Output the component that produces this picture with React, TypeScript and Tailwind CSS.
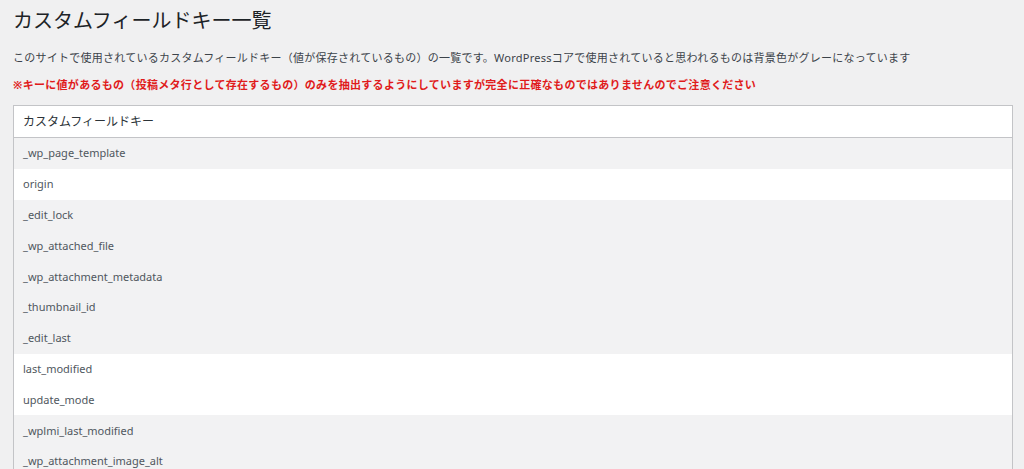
import React from "react";

const rows: { key: string; core: boolean }[] = [
  { key: "_wp_page_template", core: true },
  { key: "origin", core: false },
  { key: "_edit_lock", core: true },
  { key: "_wp_attached_file", core: true },
  { key: "_wp_attachment_metadata", core: true },
  { key: "_thumbnail_id", core: true },
  { key: "_edit_last", core: true },
  { key: "last_modified", core: false },
  { key: "update_mode", core: false },
  { key: "_wplmi_last_modified", core: true },
  { key: "_wp_attachment_image_alt", core: true },
];

export default function App() {
  return (
    <div
      className="w-[1024px] h-[469px] overflow-hidden bg-[#f0f0f1] text-[#3c434a] pl-[13px] pr-[11px]"
      style={{ fontFamily: '"Noto Sans", "Noto Sans CJK JP", sans-serif' }}
    >
      <h1 className="pt-[7px] text-[20px] leading-[28px] font-normal text-[#1d2327]">
        カスタムフィールドキー一覧
      </h1>
      <p className="mt-[14px] text-[11px] leading-[18px] tracking-[0.25px]">
        このサイトで使用されているカスタムフィールドキー（値が保存されているもの）の一覧です。WordPressコアで使用されていると思われるものは背景色がグレーになっています
      </p>
      <p className="mt-[9px] text-[11px] leading-[18px] font-bold text-[#e01b1b] tracking-[0.3px]">
        ※キーに値があるもの（投稿メタ行として存在するもの）のみを抽出するようにしていますが完全に正確なものではありませんのでご注意ください
      </p>
      <div className="mt-[11px] border border-[#c3c4c7] bg-white">
        <div className="h-[32px] flex items-center px-[9px] text-[12px] text-[#2c3338] border-b border-[#c3c4c7]">
          カスタムフィールドキー
        </div>
        {rows.map((r) => (
          <div
            key={r.key}
            className={
              r.core
                ? "h-[30.8px] flex items-center px-[9px] text-[11px] leading-[14px] text-[#50575e] bg-[#f2f2f3]"
                : "h-[30.8px] flex items-center px-[9px] text-[11px] leading-[14px] text-[#50575e] bg-white"
            }
          >
            {r.key}
          </div>
        ))}
      </div>
    </div>
  );
}
